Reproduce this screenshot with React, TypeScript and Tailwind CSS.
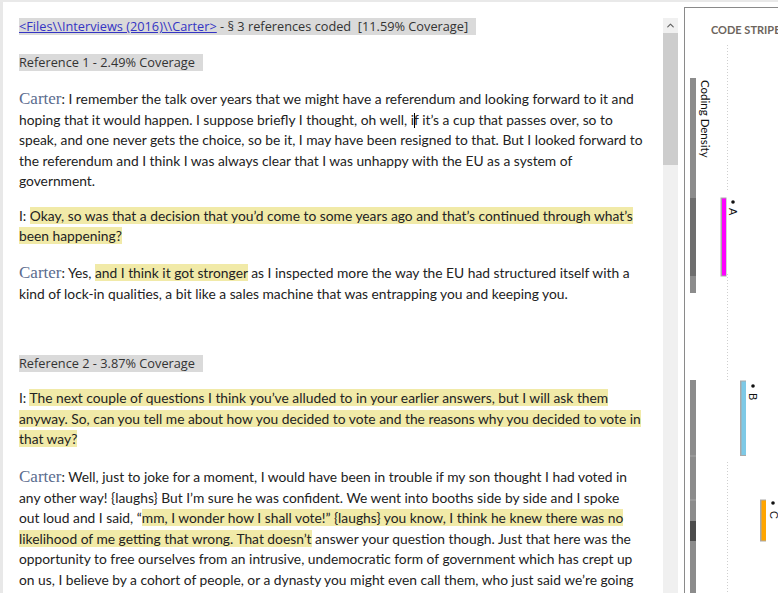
import { ChevronUp } from "lucide-react";
import type { ReactNode } from "react";

const hl = "bg-[#f1eaa8]";

function Carter() {
  return (
    <span className="font-[family-name:'Liberation_Serif',serif] text-[17px] text-[#5b6c8e]">
      Carter
    </span>
  );
}

function Para({ lines, className = "" }: { lines: ReactNode[]; className?: string }) {
  return (
    <div className={`leading-[20.5px] ${className}`}>
      {lines.map((l, i) => (
        <div key={i} className="whitespace-pre">
          {l}
        </div>
      ))}
    </div>
  );
}

function RefLabel({ children, className = "" }: { children: ReactNode; className?: string }) {
  return (
    <div className={`flex ${className}`}>
      <span className="block h-[17px] whitespace-pre bg-[#dadada] pr-[8px] font-[family-name:'Open_Sans',sans-serif] text-[12.75px] leading-[17px] text-[#333]">
        {children}
      </span>
    </div>
  );
}

function Stripes() {
  return (
    <svg width="93" height="548" viewBox="685 45 93 548" className="block">
      {/* dotted guide */}
      <g stroke="#cfcfcf" strokeWidth="1" strokeDasharray="1 2">
        <line x1="727.5" y1="45" x2="727.5" y2="190" />
        <line x1="727.5" y1="274" x2="727.5" y2="380" />
        <line x1="727.5" y1="462" x2="727.5" y2="593" />
      </g>

      {/* coding density bar */}
      <rect x="690" y="78" width="6" height="215" fill="#8c8c8c" />
      <rect x="690" y="198" width="6" height="78" fill="#6e6e6e" />
      <rect x="690" y="380" width="6" height="213" fill="#8c8c8c" />
      <rect x="690" y="455.5" width="6" height="1" fill="#a5a5a5" />
      <rect x="690" y="499.5" width="6" height="1" fill="#a5a5a5" />
      <rect x="690" y="521" width="6" height="20" fill="#4c4c4c" />
      <text
        transform="translate(700.5 80) rotate(90)"
        fontSize="11.5"
        fontFamily="Lato, sans-serif"
        fill="#111"
      >
        Coding Density
      </text>

      {/* A */}
      <rect x="720.5" y="197.5" width="6" height="79" fill="#a9a9a9" />
      <rect x="722" y="198.5" width="4" height="77" fill="#ff00ff" />
      <circle cx="733" cy="202" r="1.8" fill="#111" />
      <text transform="translate(729 208) rotate(90)" fontSize="11" fontFamily="Liberation Sans, sans-serif" fill="#111">
        A
      </text>

      {/* B */}
      <rect x="740" y="380.5" width="6" height="75.5" fill="#a9a9a9" />
      <rect x="741.5" y="381.5" width="4.5" height="73.5" fill="#7ec9e6" />
      <circle cx="753" cy="386" r="1.8" fill="#111" />
      <text transform="translate(749 393) rotate(90)" fontSize="11" fontFamily="Liberation Sans, sans-serif" fill="#111">
        B
      </text>

      {/* C */}
      <rect x="760" y="499.5" width="6" height="42" fill="#a9a9a9" />
      <rect x="761.5" y="500.5" width="4.5" height="40" fill="#ffa500" />
      <circle cx="773" cy="503" r="1.8" fill="#111" />
      <text transform="translate(770 511) rotate(90)" fontSize="11" fontFamily="Liberation Sans, sans-serif" fill="#111">
        C
      </text>
    </svg>
  );
}

export default function App() {
  return (
    <div className="flex h-[593px] w-[778px] overflow-hidden border-t-2 border-[#e9e9e9] bg-white">
      <main className="w-[663px] shrink-0 border-l-[3px] border-[#e8e8e8] pl-[16px] font-[family-name:Lato,sans-serif] text-[13.8px] text-[#222]">
        <RefLabel className="mt-[16px]">
          <span className="text-[#3434c4] underline">{"<Files\\\\Interviews (2016)\\\\Carter>"}</span>
          {" - § 3 references coded  [11.59% Coverage]"}
        </RefLabel>

        <RefLabel className="mt-[19px]">Reference 1 - 2.49% Coverage</RefLabel>

        <Para
          className="mt-[18px]"
          lines={[
            <>
              <Carter />: I remember the talk over years that we might have a referendum and looking forward to it and
            </>,
            <>
              hoping that it would happen. I suppose briefly I thought, oh well, i
              <span className="-mr-px inline-block h-[15px] w-px bg-black align-[-3px]" />f it’s a cup that passes over, so to
            </>,
            "speak, and one never gets the choice, so be it, I may have been resigned to that. But I looked forward to",
            "the referendum and I think I was always clear that I was unhappy with the EU as a system of",
            "government.",
          ]}
        />

        <Para
          className="mt-[14px]"
          lines={[
            <>
              I: <span className={hl}>Okay, so was that a decision that you’d come to some years ago and that’s continued through what’s</span>
            </>,
            <span className={hl}>been happening?</span>,
          ]}
        />

        <Para
          className="mt-[16.5px]"
          lines={[
            <>
              <Carter />: Yes, <span className={hl}>and I think it got stronger</span> as I inspected more the way the EU had structured itself with a
            </>,
            "kind of lock-in qualities, a bit like a sales machine that was entrapping you and keeping you.",
          ]}
        />

        <RefLabel className="mt-[51px]">Reference 2 - 3.87% Coverage</RefLabel>

        <Para
          className="mt-[16px]"
          lines={[
            <>
              I: <span className={hl}>The next couple of questions I think you’ve alluded to in your earlier answers, but I will ask them</span>
            </>,
            <span className={hl}>anyway. So, can you tell me about how you decided to vote and the reasons why you decided to vote in</span>,
            <span className={hl}>that way?</span>,
          ]}
        />

        <Para
          className="mt-[17.5px]"
          lines={[
            <>
              <Carter />: Well, just to joke for a moment, I would have been in trouble if my son thought I had voted in
            </>,
            "any other way! {laughs} But I’m sure he was confident. We went into booths side by side and I spoke",
            <>
              out loud and I said, “<span className={hl}>mm, I wonder how I shall vote!” {"{laughs}"} you know, I think he knew there was no</span>
            </>,
            <>
              <span className={hl}>likelihood of me getting that wrong. That doesn’t</span> answer your question though. Just that here was the
            </>,
            "opportunity to free ourselves from an intrusive, undemocratic form of government which has crept up",
            "on us, I believe by a cohort of people, or a dynasty you might even call them, who just said we’re going",
          ]}
        />
      </main>

      <div className="mt-[16px] flex w-[15px] shrink-0 flex-col bg-[#f0f0f0]">
        <div className="flex h-[15px] items-center justify-center">
          <ChevronUp size={11} strokeWidth={2.5} className="text-[#606060]" />
        </div>
        <div className="h-[132px] bg-[#cdcdcd]" />
      </div>

      <div className="w-[6px] shrink-0" />

      <aside className="mt-[5px] flex min-w-0 flex-1 flex-col border-l border-t border-[#8a8a8a]">
        <div className="h-[37px] overflow-hidden whitespace-nowrap pl-[26px] pt-[15px] font-[family-name:Lato,sans-serif] text-[11px] leading-[14px] font-bold text-[#6d655d]">
          CODE STRIPES
        </div>
        <Stripes />
      </aside>
    </div>
  );
}
